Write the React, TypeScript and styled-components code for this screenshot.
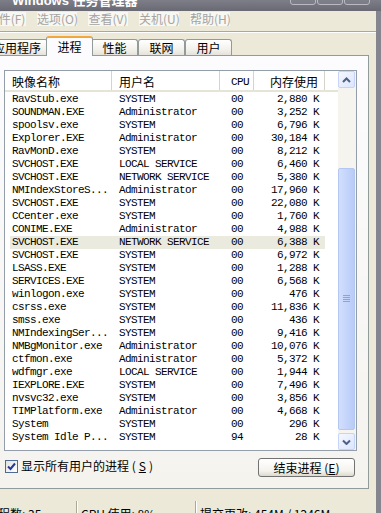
import styled, { createGlobalStyle } from "styled-components";

const CJK = `"Noto Sans CJK SC", "Liberation Sans", sans-serif`;
const MONO = `"Liberation Mono", "Noto Sans CJK SC", monospace`;

const GlobalStyle = createGlobalStyle`
  html, body {
    margin: 0;
    padding: 0;
    background: #ece9d8;
    overflow: hidden;
  }
  body {
    font-family: ${CJK};
    font-size: 12px;
    color: #000;
  }
`;

type Proc = { name: string; user: string; cpu: string; mem: string };

const processes: Proc[] = [
  { name: "RavStub.exe", user: "SYSTEM", cpu: "00", mem: "2,880 K" },
  { name: "SOUNDMAN.EXE", user: "Administrator", cpu: "00", mem: "3,252 K" },
  { name: "spoolsv.exe", user: "SYSTEM", cpu: "00", mem: "6,796 K" },
  { name: "Explorer.EXE", user: "Administrator", cpu: "00", mem: "30,184 K" },
  { name: "RavMonD.exe", user: "SYSTEM", cpu: "00", mem: "8,212 K" },
  { name: "SVCHOST.EXE", user: "LOCAL SERVICE", cpu: "00", mem: "6,460 K" },
  { name: "SVCHOST.EXE", user: "NETWORK SERVICE", cpu: "00", mem: "5,380 K" },
  { name: "NMIndexStoreS...", user: "Administrator", cpu: "00", mem: "17,960 K" },
  { name: "SVCHOST.EXE", user: "SYSTEM", cpu: "00", mem: "22,080 K" },
  { name: "CCenter.exe", user: "SYSTEM", cpu: "00", mem: "1,760 K" },
  { name: "CONIME.EXE", user: "Administrator", cpu: "00", mem: "4,988 K" },
  { name: "SVCHOST.EXE", user: "NETWORK SERVICE", cpu: "00", mem: "6,388 K" },
  { name: "SVCHOST.EXE", user: "SYSTEM", cpu: "00", mem: "6,972 K" },
  { name: "LSASS.EXE", user: "SYSTEM", cpu: "00", mem: "1,288 K" },
  { name: "SERVICES.EXE", user: "SYSTEM", cpu: "00", mem: "6,568 K" },
  { name: "winlogon.exe", user: "SYSTEM", cpu: "00", mem: "476 K" },
  { name: "csrss.exe", user: "SYSTEM", cpu: "00", mem: "11,836 K" },
  { name: "smss.exe", user: "SYSTEM", cpu: "00", mem: "436 K" },
  { name: "NMIndexingSer...", user: "SYSTEM", cpu: "00", mem: "9,416 K" },
  { name: "NMBgMonitor.exe", user: "Administrator", cpu: "00", mem: "10,076 K" },
  { name: "ctfmon.exe", user: "Administrator", cpu: "00", mem: "5,372 K" },
  { name: "wdfmgr.exe", user: "LOCAL SERVICE", cpu: "00", mem: "1,944 K" },
  { name: "IEXPLORE.EXE", user: "SYSTEM", cpu: "00", mem: "7,496 K" },
  { name: "nvsvc32.exe", user: "SYSTEM", cpu: "00", mem: "3,856 K" },
  { name: "TIMPlatform.exe", user: "Administrator", cpu: "00", mem: "4,668 K" },
  { name: "System", user: "SYSTEM", cpu: "00", mem: "296 K" },
  { name: "System Idle P...", user: "SYSTEM", cpu: "94", mem: "28 K" },
];

const SELECTED_ROW = 11;

const menus = ["文件(F)", "选项(O)", "查看(V)", "关机(U)", "帮助(H)"];

const tabs = [
  { label: "应用程序", width: 62 },
  { label: "进程", width: 47, active: true },
  { label: "性能", width: 47 },
  { label: "联网", width: 47 },
  { label: "用户", width: 47 },
];

type Col = {
  key: keyof Proc;
  title: string;
  width: number;
  pad: string;
  align: "left" | "right";
  mono?: boolean;
};

const columns: Col[] = [
  { key: "name", title: "映像名称", width: 107, pad: "0 0 0 7px", align: "left" },
  { key: "user", title: "用户名", width: 108, pad: "0 0 0 7px", align: "left" },
  { key: "cpu", title: "CPU", width: 34, pad: "0 0 0 11px", align: "left", mono: true },
  { key: "mem", title: "内存使用", width: 71, pad: "0 6px 0 0", align: "right" },
];

// 창 틀
const Window = styled.div`
  width: 397px;
  height: 513px;
  margin-left: -16px;
  display: flex;
  flex-direction: column;
  overflow: hidden;
`;

const TitleBar = styled.div`
  height: 11px;
  flex: none;
  display: flex;
  align-items: flex-start;
  overflow: hidden;
  background: linear-gradient(#7e7e88, #696973);
`;

const Title = styled.span`
  margin: -7px 0 0 28px;
  font-family: "Liberation Sans", "Noto Sans CJK SC", sans-serif;
  font-weight: bold;
  font-size: 13px;
  line-height: 15px;
  color: #fff;
  white-space: nowrap;
`;

const CaptionButtons = styled.div`
  display: flex;
  gap: 1px;
  margin: -16px 11px 0 auto;
`;

const CaptionButton = styled.div`
  width: 26px;
  height: 21px;
  box-sizing: border-box;
  border: 1px solid #b9b9c2;
  border-radius: 3px;
  background: linear-gradient(#95959f, #7b7b85);
`;

const Frame = styled.div`
  flex: 1;
  min-height: 0;
  display: flex;
  flex-direction: column;
  background: #ece9d8;
  border-right: 5px solid #85858f;
`;

// 메뉴
const MenuBar = styled.div`
  height: 20px;
  flex: none;
  display: flex;
  align-items: flex-start;
  gap: 11px;
  padding: 1px 0 0 2px;
  box-sizing: border-box;
`;

const MenuItem = styled.div`
  width: 40px;
  height: 14px;
  line-height: 14px;
  text-align: center;
  white-space: nowrap;
  font-size: 12px;
  color: #a4a4a4;
  background: #f8f7f1;
`;

const MenuSep = styled.div`
  height: 0;
  flex: none;
  border-top: 1px solid #aca899;
  border-bottom: 1px solid #fff;
`;

// 탭
const TabStrip = styled.div`
  height: 22px;
  flex: none;
  display: flex;
  align-items: flex-end;
  padding-left: 2px;
  position: relative;
  z-index: 1;
`;

const Tab = styled.div<{ $w: number; $active?: boolean }>`
  width: ${(p) => p.$w}px;
  flex: none;
  box-sizing: border-box;
  border: 1px solid #919b9c;
  border-bottom: none;
  border-radius: 3px 3px 0 0;
  text-align: center;
  font-size: 12px;
  white-space: nowrap;
  ${(p) =>
    p.$active
      ? `
    height: 20px;
    margin: 0 -2px -1px;
    line-height: 17px;
    background: #fcfcfe;
    border-top: 2px solid #f2a73c;
    position: relative;
    z-index: 2;
  `
      : `
    height: 16px;
    line-height: 15px;
    background: linear-gradient(#ffffff, #f3f2ec 60%, #e4e2da);
  `}
`;

const Panel = styled.div`
  height: 434px;
  flex: none;
  margin: 0 7px 0 4px;
  box-sizing: border-box;
  border: 1px solid #919b9c;
  background: linear-gradient(#fcfcfe, #f4f3ee);
  padding: 14px 11px 0 15px;
  display: flex;
  flex-direction: column;
`;

// 목록
const ListBox = styled.div`
  height: 381px;
  flex: none;
  box-sizing: border-box;
  border: 1px solid #939ea9;
  background: #fff;
  display: flex;
`;

const ListMain = styled.div`
  flex: 1;
  display: flex;
  flex-direction: column;
  overflow: hidden;
`;

const HeaderRow = styled.div`
  height: 21px;
  flex: none;
  display: flex;
  border-bottom: 2px solid #e6e3d7;
  box-sizing: border-box;
  background: #fff;
`;

const HeaderCell = styled.div<{ $w: number; $pad: string; $align: string; $mono?: boolean }>`
  width: ${(p) => p.$w}px;
  flex: none;
  box-sizing: border-box;
  border-right: 1px solid #d6d3c8;
  padding: ${(p) => p.$pad};
  padding-top: 4px;
  text-align: ${(p) => p.$align};
  font-family: ${(p) => (p.$mono ? MONO : CJK)};
  font-size: ${(p) => (p.$mono ? "11px" : "12px")};
  letter-spacing: ${(p) => (p.$mono ? "-0.6px" : "0")};
  line-height: 14px;
  white-space: nowrap;
`;

const Rows = styled.div`
  padding-top: 1px;
`;

const Row = styled.div<{ $selected?: boolean }>`
  width: 320px;
  height: 13px;
  display: grid;
  grid-template-columns: 107px 108px 34px 71px;
  background: ${(p) =>
    p.$selected ? "linear-gradient(90deg, transparent 5px, #ebeadf 5px)" : "transparent"};
`;

const Cell = styled.div<{ $pad: string; $align: string }>`
  padding: ${(p) => p.$pad};
  text-align: ${(p) => p.$align};
  font-family: ${MONO};
  font-size: 11px;
  letter-spacing: -0.6px;
  line-height: 13px;
  white-space: nowrap;
  overflow: hidden;
`;

// 스크롤바
const ScrollBar = styled.div`
  width: 18px;
  flex: none;
  display: flex;
  flex-direction: column;
  background: #f5f4ef;
`;

const ScrollButton = styled.div`
  height: 17px;
  flex: none;
  box-sizing: border-box;
  margin-right: 1px;
  border: 1px solid #c6d4f7;
  border-radius: 2px;
  background: linear-gradient(135deg, #f6f8ff, #dbe5fd);
  display: flex;
  align-items: center;
  justify-content: center;
`;

const Track = styled.div`
  flex: 1;
  display: flex;
  flex-direction: column;
`;

const Thumb = styled.div`
  margin: 80px 1px 0 0;
  height: 262px;
  box-sizing: border-box;
  border: 1px solid #b4c7f3;
  border-radius: 2px;
  background: linear-gradient(90deg, #d2defc, #c2d3fb 60%, #b9cbf6);
  display: flex;
  align-items: center;
  justify-content: center;
`;

// 하단
const Footer = styled.div`
  margin-top: 7px;
  height: 19px;
  display: flex;
  align-items: flex-start;
  justify-content: space-between;
  padding: 0 2px 0 1px;
`;

const CheckLabel = styled.label`
  height: 16px;
  display: flex;
  align-items: center;
  gap: 3px;
  font-size: 12px;
  line-height: 16px;
  white-space: nowrap;
`;

const CheckBox = styled.span`
  width: 13px;
  height: 13px;
  box-sizing: border-box;
  border: 1px solid #4f6a93;
  background: linear-gradient(135deg, #e2e2dc, #ffffff);
  display: flex;
  align-items: center;
  justify-content: center;
`;

const EndButton = styled.button`
  width: 97px;
  height: 19px;
  padding: 0;
  box-sizing: border-box;
  border: 1px solid #727272;
  border-radius: 3px;
  background: linear-gradient(#ffffff, #f4f3ee 70%, #dcd9cd);
  font-family: ${CJK};
  font-size: 12px;
  line-height: 16px;
  color: #000;
`;

const StatusBar = styled.div`
  flex: 1;
  display: flex;
  padding-top: 12px;
  white-space: nowrap;
`;

const StatusPane = styled.div<{ $w?: number; $first?: boolean }>`
  ${(p) => (p.$w ? `width: ${p.$w}px; flex: none;` : "flex: 1;")}
  box-sizing: border-box;
  padding: 5px 0 0 ${(p) => (p.$first ? 2 : 4)}px;
  font-size: 12px;
  line-height: 15px;
  ${(p) => (p.$first ? "" : "border-left: 1px solid #aca899; box-shadow: inset 1px 0 #fff;")}
`;

const Chevron = ({ down }: { down?: boolean }) => (
  <svg width="9" height="6" viewBox="0 0 9 6">
    <polyline
      points={down ? "1,1.5 4.5,5 8,1.5" : "1,5 4.5,1.5 8,5"}
      fill="none"
      stroke="#4d6185"
      strokeWidth="2"
    />
  </svg>
);

const App = () => {
  return (
    <>
      <GlobalStyle />
      <Window>
        <TitleBar>
          <Title>Windows 任务管理器</Title>
          <CaptionButtons>
            <CaptionButton />
            <CaptionButton />
            <CaptionButton />
          </CaptionButtons>
        </TitleBar>
        <Frame>
          <MenuBar>
            {menus.map((m) => (
              <MenuItem key={m}>{m}</MenuItem>
            ))}
          </MenuBar>
          <MenuSep />
          <TabStrip>
            {tabs.map((t) => (
              <Tab key={t.label} $w={t.width} $active={t.active}>
                {t.label}
              </Tab>
            ))}
          </TabStrip>
          <Panel>
            <ListBox>
              <ListMain>
                <HeaderRow>
                  {columns.map((c) => (
                    <HeaderCell key={c.key} $w={c.width} $pad={c.pad} $align={c.align} $mono={c.mono}>
                      {c.title}
                    </HeaderCell>
                  ))}
                </HeaderRow>
                <Rows>
                  {processes.map((p, i) => (
                    <Row key={i} $selected={i === SELECTED_ROW}>
                      {columns.map((c) => (
                        <Cell key={c.key} $pad={c.pad} $align={c.align}>
                          {p[c.key]}
                        </Cell>
                      ))}
                    </Row>
                  ))}
                </Rows>
              </ListMain>
              <ScrollBar>
                <ScrollButton>
                  <Chevron />
                </ScrollButton>
                <Track>
                  <Thumb>
                    <svg width="7" height="8" viewBox="0 0 7 8">
                      {[0.5, 2.5, 4.5, 6.5].map((y) => (
                        <line key={y} x1="0" x2="7" y1={y} y2={y} stroke="#8aa4e0" strokeWidth="1" />
                      ))}
                    </svg>
                  </Thumb>
                </Track>
                <ScrollButton>
                  <Chevron down />
                </ScrollButton>
              </ScrollBar>
            </ListBox>
            <Footer>
              <CheckLabel>
                <CheckBox>
                  <svg width="9" height="9" viewBox="0 0 9 9">
                    <polyline points="1,4.5 3.5,7 8,1.5" fill="none" stroke="#23399a" strokeWidth="2" />
                  </svg>
                </CheckBox>
                显示所有用户的进程 (<u>S</u>)
              </CheckLabel>
              <EndButton>
                结束进程 (<u>E</u>)
              </EndButton>
            </Footer>
          </Panel>
          <StatusBar>
            <StatusPane $w={92} $first>
              进程数: 35
            </StatusPane>
            <StatusPane $w={119}>CPU 使用: 8%</StatusPane>
            <StatusPane>提交更改: 454M / 1246M</StatusPane>
          </StatusBar>
        </Frame>
      </Window>
    </>
  );
};

export default App;
